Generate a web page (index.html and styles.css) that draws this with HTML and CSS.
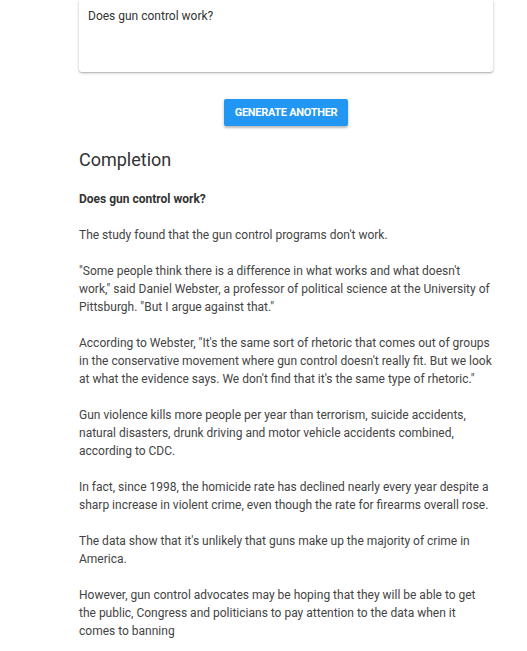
FILE: index.html
```html
<!DOCTYPE html>
<html lang="en">
<head>
  <meta charset="UTF-8">
  <meta name="viewport" content="width=device-width, initial-scale=1.0">
  <title>Completion</title>
  <link rel="stylesheet" href="styles.css">
</head>
<body>
  <div class="container">
    <!-- prompt card -->
    <div class="prompt-card">
      <div class="prompt-text">Does gun control work?</div>
    </div>

    <div class="actions">
      <button class="btn-generate">Generate another</button>
    </div>

    <!-- completion output -->
    <h2 class="completion-title">Completion</h2>
    <div class="completion">
      <p class="prompt-echo">Does gun control work?</p>
      <p>The study found that the gun control programs don't work.</p>
      <p>"Some people think there is a difference in what works and what doesn't work," said Daniel Webster, a professor of political science at the University of Pittsburgh. "But I argue against that."</p>
      <p>According to Webster, "It's the same sort of rhetoric that comes out of groups in the conservative movement where gun control doesn't really fit. But we look at what the evidence says. We don't find that it's the same type of rhetoric."</p>
      <p>Gun violence kills more people per year than terrorism, suicide accidents, natural disasters, drunk driving and motor vehicle accidents combined, according to CDC.</p>
      <p>In fact, since 1998, the homicide rate has declined nearly every year despite a sharp increase in violent crime, even though the rate for firearms overall rose.</p>
      <p>The data show that it's unlikely that guns make up the majority of crime in America.</p>
      <p>However, gun control advocates may be hoping that they will be able to get the public, Congress and politicians to pay attention to the data when it comes to banning</p>
    </div>
  </div>
</body>
</html>
```

FILE: styles.css
```css
body {
  font-family: Roboto, "Liberation Sans", sans-serif;
  margin: 0;
  padding: 0;
  background-color: #ffffff;
  color: #333333;
}

.container {
  width: 414px;
  margin-left: 79px;
}

.prompt-card {
  height: 72px;
  box-sizing: border-box;
  padding: 8px 9px;
  background-color: #ffffff;
  border-radius: 0 0 3px 3px;
  box-shadow: 0 1px 3px rgba(0, 0, 0, 0.25), 0 1px 1px rgba(0, 0, 0, 0.12);
}

.prompt-text {
  font-size: 12px;
  line-height: 16px;
  color: #333333;
}

.actions {
  display: flex;
  justify-content: center;
  padding-top: 27px;
}

.btn-generate {
  width: 124px;
  height: 27px;
  padding: 0;
  border: none;
  border-radius: 2px;
  background-color: #2196f3;
  color: #ffffff;
  font-family: Roboto, "Liberation Sans", sans-serif;
  font-size: 11px;
  font-weight: 700;
  text-transform: uppercase;
  letter-spacing: -0.3px;
  box-shadow: 0 2px 2px rgba(0, 0, 0, 0.2), 0 1px 4px rgba(0, 0, 0, 0.12);
}

.completion-title {
  margin: 22px 0 0;
  font-size: 18px;
  font-weight: 400;
  line-height: 24px;
  color: #333333;
}

.completion {
  margin-top: 18px;
  font-size: 12px;
  line-height: 18px;
  color: #444444;
}

.completion p {
  margin: 0 0 18px;
}

.completion .prompt-echo {
  font-weight: 700;
  color: #333333;
}
```
